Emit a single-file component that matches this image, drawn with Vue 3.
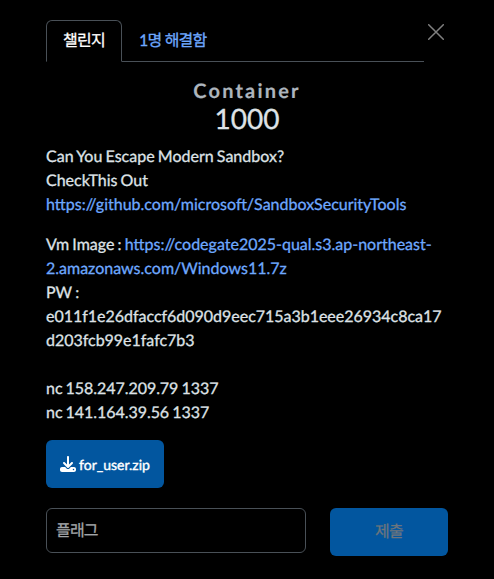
<script setup>
import { ref } from 'vue'

const flag = ref('')
const addresses = ['nc 158.247.209.79 1337', 'nc 141.164.39.56 1337']
</script>

<template>
  <main class="dialog">
    <header class="top">
      <nav class="tabs">
        <button class="tab active">챌린지</button>
        <button class="tab">1명 해결함</button>
      </nav>
      <button class="close" aria-label="닫기">
        <svg viewBox="0 0 16 16" width="16" height="16">
          <path d="M.7.7l14.6 14.6M15.3.7L.7 15.3" fill="none" stroke="currentColor" stroke-width="1.5" stroke-linecap="round" />
        </svg>
      </button>
    </header>
    <h2 class="name">Container</h2>
    <h3 class="value">1000</h3>
    <section class="description">
      <p>
        Can You Escape Modern Sandbox?<br />CheckThis Out<br />
        <a href="#">https://github.com/microsoft/SandboxSecurityTools</a>
      </p>
      <p>
        Vm Image : <a href="#">https://codegate2025-qual.s3.ap-northeast-<br />2.amazonaws.com/Windows11.7z</a><br />
        PW :<br /><span class="hash">e011f1e26dfaccf6d090d9eec715a3b1eee26934c8ca17<br />d203fcb99e1fafc7b3</span>
      </p>
      <ul class="addresses">
        <li v-for="address in addresses" :key="address">{{ address }}</li>
      </ul>
    </section>
    <a class="file" href="#">
      <svg viewBox="0 0 512 512" width="16" height="16">
        <path fill="currentColor" d="M288 32c0-17.700-14.300-32-32-32s-32 14.300-32 32v242.700l-73.400-73.400c-12.500-12.500-32.800-12.500-45.300 0s-12.500 32.800 0 45.300l128 128c12.500 12.500 32.800 12.500 45.300 0l128-128c12.500-12.500 12.500-32.800 0-45.300s-32.800-12.500-45.300 0L288 274.700V32zM64 352c-35.300 0-64 28.700-64 64v32c0 35.300 28.700 64 64 64h384c35.300 0 64-28.700 64-64v-32c0-35.300-28.700-64-64-64H346.500l-45.300 45.300c-25 25-65.500 25-90.500 0L165.500 352H64zm368 56a24 24 0 1 1 0 48 24 24 0 1 1 0-48z" />
      </svg>
      <span>for_user.zip</span>
    </a>
    <form class="answer" @submit.prevent>
      <input v-model="flag" class="flag" type="text" placeholder="플래그" />
      <button class="submit" disabled>제출</button>
    </form>
  </main>
</template>

<style>
body {
  background: #000;
}
</style>

<style scoped>
.dialog {
  box-sizing: border-box;
  width: 494px;
  height: 579px;
  padding: 20px 46px 0;
  background: #000;
  color: #dee2e6;
  font: 400 16px/24px Lato, "Noto Sans CJK KR", sans-serif;
  text-rendering: geometricPrecision;
  -webkit-text-stroke: 0.3px currentColor;
}
.top {
  display: flex;
  align-items: flex-start;
}
.tabs {
  display: flex;
  width: 378px;
  height: 42px;
  box-sizing: border-box;
  flex: none;
  border-bottom: 1px solid #495057;
}
button,
input {
  font: inherit;
  text-rendering: inherit;
  letter-spacing: -0.8px;
}
.tab {
  box-sizing: border-box;
  height: 42px;
  padding: 0 16px;
  border: 1px solid transparent;
  border-radius: 6px 6px 0 0;
  background: none;
  color: #6ea8fe;
  white-space: nowrap;
}
.tab.active {
  width: 76px;
  border-color: #495057;
  border-bottom-color: #000;
  background: #000;
  color: #fff;
}
.close {
  display: flex;
  margin: 4px 0 0 4px;
  padding: 0;
  border: 0;
  background: none;
  color: #808080;
}
.name {
  margin: 15px 0 0;
  color: #adb5bd;
  text-align: center;
  font-size: 20px;
  font-weight: 700;
  line-height: 28px;
  letter-spacing: 2.2px;
  -webkit-text-stroke-width: 0.2px;
}
.value {
  margin: -1px 0 0;
  text-align: center;
  font-size: 28px;
  font-weight: 400;
  line-height: 28px;
}
.description {
  margin-top: 13px;
  word-spacing: -0.9px;
}
.description p {
  margin: 0 0 16px;
  white-space: nowrap;
}
.description a {
  color: #6ea8fe;
  text-decoration: none;
}
.hash {
  letter-spacing: -0.02px;
}
.addresses {
  margin: 24px 0 0;
  padding: 0;
  list-style: none;
  letter-spacing: -0.05px;
}
.file {
  display: flex;
  box-sizing: border-box;
  width: 118px;
  height: 48px;
  margin-top: 15px;
  align-items: center;
  justify-content: center;
  gap: 3px;
  border-radius: 6px;
  background: #02569f;
  color: #fff;
  font-size: 14px;
  text-decoration: none;
  -webkit-text-stroke-width: 0.4px;
}
.file span {
  padding-top: 2px;
}
.answer {
  display: flex;
  margin-top: 20px;
  align-items: flex-start;
  gap: 24px;
}
.flag {
  box-sizing: border-box;
  width: 260px;
  height: 45px;
  padding: 0 9px;
  border: 1px solid #495057;
  border-radius: 6px;
  outline: none;
  background: #000;
  color: #dee2e6;
}
.flag::placeholder {
  color: #a2a5a8;
}
.submit {
  width: 118px;
  height: 48px;
  padding: 0;
  border: 0;
  border-radius: 6px;
  background: #02569f;
  color: #6c757d;
}
</style>
